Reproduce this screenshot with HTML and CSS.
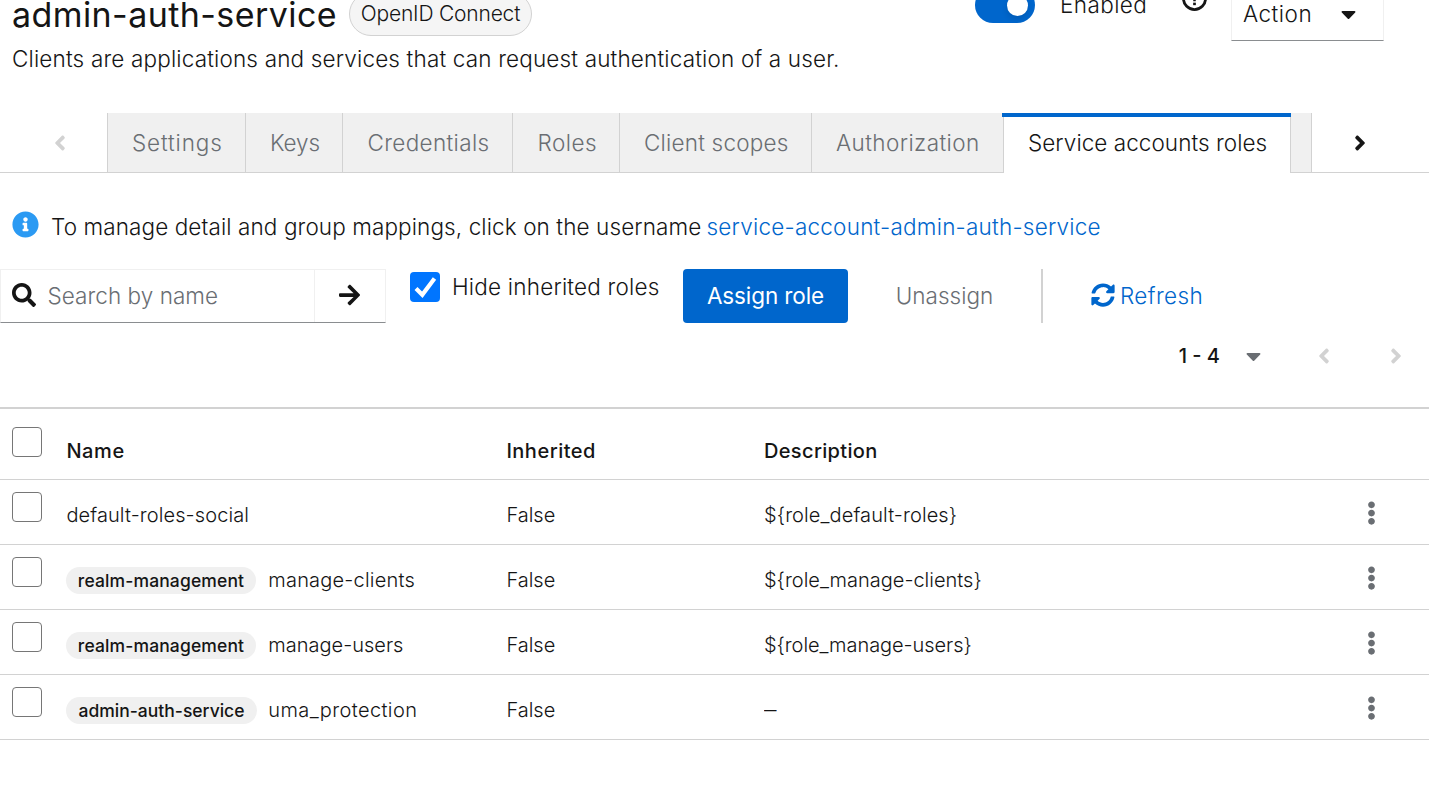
FILE: index.html
```html
<!DOCTYPE html>
<html lang="en">
<head>
<meta charset="utf-8">
<title>admin-auth-service</title>
<link rel="stylesheet" href="styles.css">
</head>
<body>
<svg class="defs" aria-hidden="true">
  <symbol id="angle-left" viewBox="0 0 256 512"><path d="M31.7 239l136-136c9.4-9.4 24.6-9.4 33.9 0l22.6 22.6c9.4 9.4 9.4 24.6 0 33.9L127.9 256l96.4 96.4c9.4 9.4 9.4 24.6 0 33.9L201.7 409c-9.4 9.4-24.6 9.4-33.9 0l-136-136c-9.5-9.4-9.5-24.6-.1-34z"/></symbol>
  <symbol id="angle-right" viewBox="0 0 256 512"><path d="M224.3 273l-136 136c-9.4 9.4-24.6 9.4-33.9 0l-22.6-22.6c-9.4-9.4-9.4-24.6 0-33.9l96.4-96.4-96.4-96.4c-9.4-9.4-9.4-24.6 0-33.9L54.3 103c9.4-9.4 24.6-9.4 33.9 0l136 136c9.5 9.4 9.5 24.6.1 34z"/></symbol>
  <symbol id="caret" viewBox="0 0 320 512"><path d="M31.3 192h257.3c17.8 0 26.7 21.5 14.1 34.1L174.1 354.8c-7.8 7.8-20.5 7.8-28.3 0L17.2 226.1C4.6 213.5 13.5 192 31.3 192z"/></symbol>
  <symbol id="kebab" viewBox="0 0 192 512"><path d="M96 184c39.8 0 72 32.2 72 72s-32.2 72-72 72-72-32.2-72-72 32.2-72 72-72zM24 80c0 39.8 32.2 72 72 72s72-32.2 72-72S135.8 8 96 8 24 40.2 24 80zm0 352c0 39.8 32.2 72 72 72s72-32.2 72-72-32.2-72-72-72-72 32.2-72 72z"/></symbol>
</svg>

<header class="header">
  <h1 class="title">admin-auth-service</h1>
  <span class="protocol">OpenID Connect</span>
  <div class="controls">
    <span class="switch"><span class="knob"></span></span>
    <span class="enabled">Enabled</span>
    <svg class="help" viewBox="0 0 24 24"><circle cx="12" cy="12" r="10.6" fill="none" stroke="#151515" stroke-width="2.7"/><path d="M8.500 8.500a3.500 3.200 0 1 1 4.800 2.600c-1 .4-1.300.8-1.300 1.600v2" fill="none" stroke="#151515" stroke-width="2.400"/><rect x="10.700" y="16" width="2.600" height="2.400"/></svg>
    <button class="action t50">Action<svg class="ic-caret"><use href="#caret"/></svg></button>
  </div>
</header>
<p class="lead">Clients are applications and services that can request authentication of a user.</p>

<nav class="tabs">
  <button class="scroll prev"><svg class="ic-angle"><use href="#angle-left"/></svg></button>
  <a class="tab settings"><span>Settings</span></a>
  <a class="tab keys"><span>Keys</span></a>
  <a class="tab credentials"><span>Credentials</span></a>
  <a class="tab roles"><span>Roles</span></a>
  <a class="tab scopes"><span>Client scopes</span></a>
  <a class="tab authz"><span>Authorization</span></a>
  <a class="tab current"><span>Service accounts roles</span></a>
  <a class="tab cut"></a>
  <button class="scroll next"><svg class="ic-angle"><use href="#angle-right"/></svg></button>
</nav>

<div class="hint">
  <svg class="info" viewBox="0 0 512 512"><path d="M256 8C119 8 8 119.1 8 256c0 137 111 248 248 248s248-111 248-248C504 119.1 393 8 256 8zm0 110c23.2 0 42 18.8 42 42s-18.8 42-42 42-42-18.8-42-42 18.8-42 42-42zm56 254c0 6.6-5.4 12-12 12h-88c-6.6 0-12-5.4-12-12v-24c0-6.600 5.4-12 12-12h12v-64h-12c-6.6 0-12-5.4-12-12v-24c0-6.6 5.4-12 12-12h64c6.6 0 12 5.4 12 12v100h12c6.6 0 12 5.4 12 12v24z"/></svg>
  <span class="hint-text">To manage detail and group mappings, click on the username</span>
  <a class="link">service-account-admin-auth-service</a>
</div>

<div class="toolbar">
  <div class="search">
    <svg class="ic-search" viewBox="0 0 512 512"><path d="M505 442.7L405.3 343c-4.5-4.5-10.6-7-17-7H372c27.6-35.3 44-79.7 44-128C416 93.1 322.9 0 208 0S0 93.1 0 208s93.1 208 208 208c48.3 0 92.7-16.4 128-44v16.3c0 6.4 2.5 12.5 7 17l99.7 99.7c9.4 9.4 24.6 9.4 33.9 0l28.3-28.3c9.4-9.4 9.4-24.6.1-34zM208 336c-70.7 0-128-57.2-128-128 0-70.7 57.2-128 128-128 70.7 0 128 57.2 128 128 0 70.7-57.2 128-128 128z"/></svg>
    <span class="placeholder">Search by name</span>
    <button class="go"><svg class="ic-arrow" viewBox="0 0 448 512"><path d="M190.5 66.9l22.2-22.2c9.4-9.4 24.6-9.4 33.9 0L441 239c9.4 9.4 9.4 24.6 0 33.9L246.6 467.3c-9.4 9.4-24.6 9.4-33.9 0l-22.2-22.2c-9.5-9.5-9.3-25 .4-34.3L311.4 296H24c-13.3 0-24-10.7-24-24v-32c0-13.3 10.7-24 24-24h287.4L190.9 101.2c-9.8-9.3-10-24.8-.4-34.3z"/></svg></button>
  </div>
  <label class="hide"><span class="check on"><svg viewBox="0 0 30 30"><path d="M6 16.5l6.3 6.2L24.5 6.5" fill="none" stroke="#fff" stroke-width="4.200"/></svg></span><span class="hide-text">Hide inherited roles</span></label>
  <button class="assign">Assign role</button>
  <button class="unassign">Unassign</button>
  <button class="refresh"><svg class="ic-sync" viewBox="0 0 512 512"><path d="M370.72 133.28C339.458 104.008 298.888 87.962 255.848 88c-77.458.068-144.328 53.178-162.791 126.85-1.344 5.363-6.122 9.15-11.651 9.15H24.103c-7.498 0-13.194-6.807-11.807-14.176C33.933 94.924 134.813 8 256 8c66.448 0 126.791 26.136 171.315 68.685L463.03 40.97C478.149 25.851 504 36.559 504 57.941V192c0 13.255-10.745 24-24 24H345.941c-21.382 0-32.09-25.851-16.971-40.971l41.75-41.749zM32 296h134.059c21.382 0 32.09 25.851 16.971 40.971l-41.75 41.75c31.262 29.273 71.835 45.319 114.876 45.28 77.418-.07 144.315-53.144 162.787-126.849 1.344-5.363 6.122-9.15 11.651-9.15h57.304c7.498 0 13.194 6.807 11.807 14.176C478.067 417.076 377.187 504 256 504c-66.448 0-126.791-26.136-171.315-68.685L48.97 471.03C33.851 486.149 8 475.441 8 454.059V320c0-13.255 10.745-24 24-24z"/></svg>Refresh</button>
</div>

<div class="pager">
  <span class="range">1 - 4</span>
  <svg class="ic-caret grey"><use href="#caret"/></svg>
  <svg class="ic-angle page-prev"><use href="#angle-left"/></svg>
  <svg class="ic-angle page-next"><use href="#angle-right"/></svg>
</div>

<div class="table">
  <div class="row head"><span class="check"></span><b class="t60">Name</b><b class="t50">Inherited</b><b class="t35">Description</b></div>
  <div class="row"><span class="check"></span><span class="name t10">default-roles-social</span><span>False</span><span class="t10">${role_default-roles}</span><svg class="kebab"><use href="#kebab"/></svg></div>
  <div class="row"><span class="check"></span><span class="name t20"><em class="badge">realm-management</em>manage-clients</span><span>False</span><span>${role_manage-clients}</span><svg class="kebab"><use href="#kebab"/></svg></div>
  <div class="row"><span class="check"></span><span class="name"><em class="badge">realm-management</em>manage-users</span><span>False</span><span class="tight">${role_manage-users}</span><svg class="kebab"><use href="#kebab"/></svg></div>
  <div class="row"><span class="check"></span><span class="name t40"><em class="badge wide">admin-auth-service</em>uma_protection</span><span>False</span><span class="dash">–</span><svg class="kebab"><use href="#kebab"/></svg></div>
</div>
</body>
</html>
```
FILE: styles.css
```css
* { box-sizing: border-box; }
html, body { height: 100%; overflow: hidden; }
body { margin: 0; background: #fff; color: #151515; font: 300 22.5px/32px Inter, "Liberation Sans", sans-serif; white-space: nowrap; }
button { margin: 0; padding: 0; border: 0; background: none; color: inherit; font: inherit; letter-spacing: inherit; }
svg { display: block; flex: none; fill: currentColor; }
.defs { display: none; }
.tight { letter-spacing: -.06px; }
.t10 { letter-spacing: .1px; }
.t20 { letter-spacing: .2px; }
.t35 { letter-spacing: .35px; }
.t40 { letter-spacing: .4px; }
.t50 { letter-spacing: .5px; }
.t60 { letter-spacing: .6px; }
.ic-angle { width: 12px; height: 24px; }
.ic-caret { width: 15px; height: 24px; }

.header { display: flex; align-items: flex-end; height: 41px; padding: 0 45px 0 12px; }
.title { width: 337px; margin: 0; padding-bottom: 5px; font-size: 34px; line-height: 42px; font-weight: 400; letter-spacing: .42px; }
.protocol { width: 183px; height: 44px; margin-bottom: 5px; border: 1px solid #d2d2d2; border-radius: 22px; background: #f5f5f5; font-size: 21px; line-height: 42px; text-align: center; letter-spacing: -.2px; }
.controls { display: flex; align-items: flex-end; margin-left: auto; }
.switch { display: flex; align-items: center; justify-content: flex-end; width: 60px; height: 36px; margin-bottom: 18px; padding-right: 7px; border-radius: 18px; background: #06c; }
.knob { width: 21px; height: 21px; border-radius: 50%; background: #fff; box-shadow: 0 3px 6px rgba(0, 0, 0, .12); }
.enabled { width: 122px; margin: 0 0 20px 25px; letter-spacing: .4px; }
.help { width: 25px; height: 25px; margin: 0 24px 30px 0; }
.action { display: flex; align-items: center; justify-content: space-between; width: 153px; height: 55px; padding: 0 27px 0 11px; border: 1px solid #f0f0f0; border-bottom-color: #8a8d90; }

.lead { margin: 2px 0 0 12px; line-height: 32px; letter-spacing: .16px; }

.tabs { display: flex; height: 60px; margin-top: 38px; border-bottom: 1px solid #d2d2d2; }
.scroll { display: flex; align-items: center; justify-content: center; width: 107px; color: #d2d2d2; }
.prev { padding-left: 13px; }
.prev, .tab { flex: none; }
.tab { display: flex; align-items: center; border-left: 1px solid #d2d2d2; padding-left: 24px; background: #f0f0f0; color: #6a6e73; }
.settings { width: 138px; letter-spacing: .85px; }
.keys { width: 97px; letter-spacing: -.1px; }
.credentials { width: 170px; padding-left: 24.5px; letter-spacing: .35px; }
.roles { width: 107px; padding-left: 24.5px; letter-spacing: .5px; }
.scopes { width: 192px; letter-spacing: .2px; }
.authz { width: 192px; letter-spacing: .4px; }
.current { position: relative; width: 288px; height: 60px; border-right: 1px solid #d2d2d2; padding: 0 0 0 24px; background: #fff; color: #151515; letter-spacing: .05px; }
.current::before { content: ""; position: absolute; top: 0; left: -2px; right: -1px; height: 4px; background: #06c; }
.cut { width: 21px; padding: 0; border-left: 0; border-right: 1px solid #d2d2d2; }
.next { width: 96px; color: #151515; }

.hint { display: flex; align-items: center; height: 32px; margin-top: 38px; padding-left: 12px; }
.info { width: 27px; height: 27px; margin: 0 12px 5px 0; color: #2b9af3; }
.hint-text { width: 655.500px; letter-spacing: .1px; }
.link { color: #06c; letter-spacing: .22px; }

.toolbar { display: flex; align-items: flex-start; height: 54px; margin-top: 26px; }
.search { display: flex; align-items: center; width: 386px; height: 54px; padding-left: 11px; border: 1px solid #f0f0f0; border-bottom-color: #8a8d90; }
.ic-search { width: 24px; height: 24px; margin-top: -2px; }
.placeholder { margin-left: 11.5px; color: #6a6e73; letter-spacing: .05px; }
.go { display: flex; align-items: center; justify-content: center; width: 71px; height: 52px; margin-left: auto; padding: 0 1px 2px 0; border-left: 1px solid #f0f0f0; }
.ic-arrow { width: 21px; height: 24px; }
.hide { display: flex; margin: 3px 24px 0 24px; }
.check { display: block; width: 30px; height: 30px; border: 1.5px solid #767676; border-radius: 4px; background: #fff; }
.on { border: 0; background: #0075ff; }
.hide-text { width: 207px; margin-left: 12px; line-height: 30px; letter-spacing: .2px; }
.assign { width: 165px; height: 54px; border-radius: 4px; background: #06c; color: #fff; font-weight: 400; letter-spacing: -.1px; }
.unassign { width: 195px; height: 54px; border-right: 2px solid #d2d2d2; color: #6a6e73; }
.refresh { display: flex; align-items: center; height: 54px; margin-left: 48px; color: #06c; letter-spacing: .4px; }
.ic-sync { width: 24px; height: 24px; margin: -3px 5px 0 0; }

.pager { display: flex; align-items: center; justify-content: flex-end; height: 66px; padding: 0 27px 1px 0; color: #d2d2d2; }
.range { color: #151515; font-weight: 500; font-size: 20px; margin-right: 26px; }
.grey { color: #6a6e73; margin-right: 57px; }
.page-prev { margin-right: 60px; }

.table { margin-top: 18px; border-top: 2px solid #d2d2d2; font-size: 20px; }
.row { display: grid; grid-template-columns: 54.4px 440px 257.600px 595px 24px; align-items: center; height: 65px; padding: 6px 0 0 12px; border-bottom: 1px solid #d2d2d2; }
.row .check { align-self: start; margin-top: 6px; }
.head { height: 71px; padding-top: 14px; }
.head .check { margin-top: 4px; }
.row b { font-weight: 500; }
.name { display: flex; align-items: center; }
.badge { width: 190px; height: 27px; margin: 0 12.300px 0 -.4px; border-radius: 14px; background: #f0f0f0; font: 500 17.5px/27px Inter, sans-serif; text-align: center; letter-spacing: .13px; }
.wide { width: 191px; letter-spacing: 0; margin-right: 11.300px; }
.dash { transform: scaleX(1.25); transform-origin: left; }
.kebab { width: 9px; height: 24px; color: #6a6e73; margin: -4px 0 0 8.5px; }
```
